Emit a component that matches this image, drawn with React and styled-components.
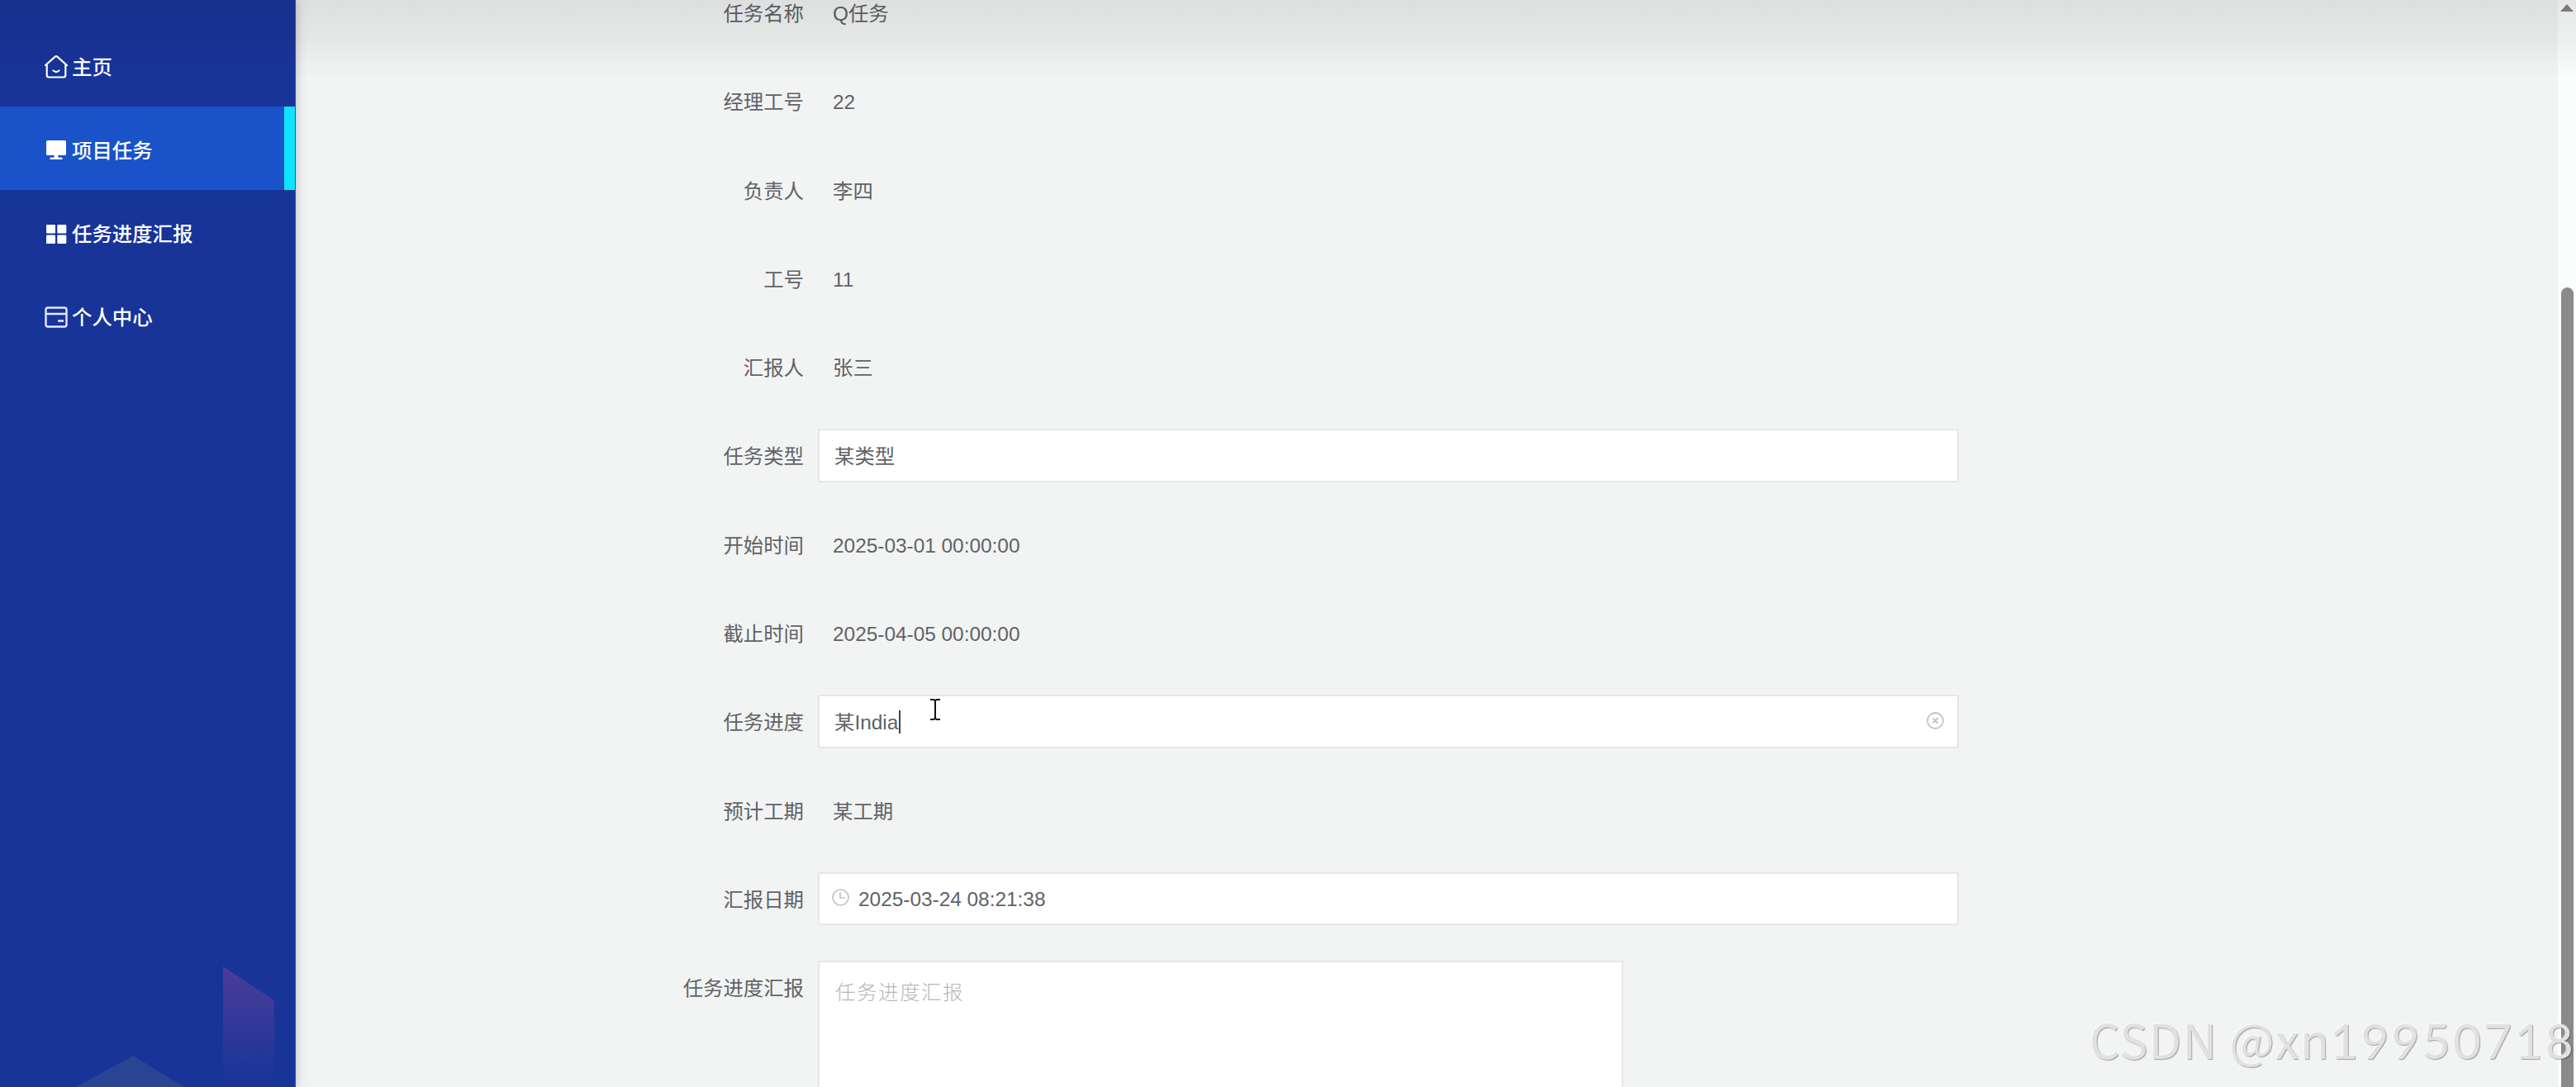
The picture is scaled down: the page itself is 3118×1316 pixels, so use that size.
import React from 'react'
import styled, { createGlobalStyle } from 'styled-components'

const GlobalStyle = createGlobalStyle`
    * {
        box-sizing: border-box;
    }

    body {
        margin: 0;
        overflow: hidden;
        font-family: "Liberation Sans", "Noto Sans CJK SC", sans-serif;
        font-size: 24.4px;
        color: #606266;
    }
`

const Page = styled.div`
    position: relative;
    display: flex;
    width: 100vw;
    height: 100vh;
    overflow: hidden;
    background: #f2f4f4;
`

const Sidebar = styled.aside`
    position: relative;
    display: flex;
    flex-direction: column;
    flex: none;
    width: 358px;
    padding-top: 28px;
    background: #183499;
    border-right: 1px solid #4b5570;
    box-shadow: 0 0 12px rgba(20, 30, 60, .28);
    z-index: 1;
`

const MenuItem = styled.div`
    display: flex;
    align-items: center;
    height: 101px;
    padding: 6px 0 0 54px;
    line-height: 36px;
    font-weight: 500;
    color: #fff;
    background: ${props => props.$active ? '#1a53c9' : 'transparent'};
    border-right: ${props => props.$active ? '13px solid #0de4ff' : '0'};

    svg {
        display: block;
        width: 28px;
        height: 28px;
        margin: 0 5px 2px 0;
    }
`

const Decoration = styled.svg`
    position: absolute;
    left: 0;
    bottom: 0;
    width: 357px;
    height: 160px;
`

const Content = styled.main`
    flex: 1;
    overflow: hidden;
`

const Form = styled.div`
    display: flex;
    flex-direction: column;
    gap: 43.3px;
    width: 1738px;
    margin: -17px 0 0 275px;
`

const Row = styled.div`
    display: flex;
    height: ${props => props.$tall ? '209px' : '64px'};
    line-height: 67px;
`

const Label = styled.div`
    flex: none;
    width: 357px;
    padding-right: 17px;
    text-align: right;
    white-space: nowrap;
`

const Value = styled.div`
    padding-left: 18px;
    white-space: nowrap;
`

const Field = styled.div`
    display: flex;
    align-items: center;
    width: 1381px;
    height: 64.5px;
    padding: 0 22px 0 ${props => props.$icon ? '15px' : '18px'};
    line-height: 60px;
    background: #fff;
    border: 2px solid #e5e7e7;
    white-space: nowrap;

    svg {
        display: block;
        flex: none;
        width: 21px;
        height: 21px;
        margin: 0 11px 4px 0;
    }

    svg.clear {
        margin: 0 -6px 3px auto;
    }
`

const FieldText = styled.span`
    padding-top: 2px;
`

const Caret = styled.span`
    width: 2px;
    height: 28px;
    margin-left: 1px;
    background: #444;
`

const Textarea = styled.div`
    width: 975px;
    height: 220px;
    padding: 6px 19px;
    line-height: 62px;
    font-weight: 300;
    letter-spacing: 1.6px;
    color: #b4b6bb;
    background: #fff;
    border: 2px solid #e5e7e7;
    box-shadow: 10px 0 0 #f4f4f4;
`

const Scrollbar = styled.div`
    display: flex;
    flex-direction: column;
    align-items: center;
    flex: none;
    width: 22px;
    padding: 5px 0 0 0;
    background: #fbfcfc;

    svg {
        display: block;
        flex: none;
        width: 16px;
        height: 9px;
    }
`

const Thumb = styled.div`
    width: 15px;
    height: 1100px;
    flex: none;
    margin-top: 334px;
    border-radius: 8px;
    background: #8a8a8a;
`

const TopShade = styled.div`
    position: absolute;
    top: 0;
    left: 0;
    right: 0;
    height: 97px;
    z-index: 2;
    background: linear-gradient(rgba(0, 0, 0, .085), rgba(0, 0, 0, .05) 50%, rgba(0, 0, 0, 0));
`

const Pointer = styled.svg`
    position: absolute;
    left: 1125px;
    top: 845px;
    width: 14px;
    height: 28px;
    z-index: 3;
`

const Watermark = styled.div`
    position: absolute;
    right: 0;
    bottom: 13px;
    z-index: 3;
    font-family: "Noto Sans CJK SC", sans-serif;
    font-size: 57.5px;
    font-weight: 400;
    line-height: 88px;
    letter-spacing: 1.2px;
    white-space: nowrap;
    color: #e1e1e1;
    text-shadow: 1px 1px 1px rgba(0, 0, 0, .35), -1px -1px 0 rgba(255, 255, 255, .5);
`

const WatermarkId = styled.span`
    font-family: Lato, sans-serif;
    font-size: 58.5px;
    letter-spacing: 3.3px;
`

const HomeIcon = () => (
    <svg viewBox="0 0 28 28" fill="none" stroke="#fff" strokeWidth="2.2" strokeLinecap="round" strokeLinejoin="round">
        <path d="M1 12 12.7 1.6q1.3-1 2.6 0L27 12M2.7 11v13q0 2.5 2.5 2.5h17.6q2.5 0 2.5-2.5V11" />
        <path d="M10.5 18.5q3.5 3 7 0" />
    </svg>
)

const MonitorIcon = () => (
    <svg viewBox="0 0 28 28" fill="#fff">
        <path d="M3.5 2h21q1.5 0 1.5 1.5v15q0 1.5-1.5 1.5h-21Q2 20 2 18.5v-15Q2 2 3.5 2zM12 20h4l.8 2.8h4.700V25h-15v-2.200h4.700z" />
    </svg>
)

const GridIcon = () => (
    <svg viewBox="0 0 28 28" fill="#fff">
        <rect x="2" y="3" width="11" height="10.5" rx="1" />
        <rect x="15.3" y="3" width="11" height="10.5" rx="1" />
        <rect x="2" y="15.5" width="11" height="10.5" rx="1" />
        <rect x="15.3" y="15.5" width="11" height="10.5" rx="1" />
    </svg>
)

const CardIcon = () => (
    <svg viewBox="0 0 28 28" fill="none" stroke="#e3e8ff" strokeWidth="2.4">
        <rect x="1.5" y="2.5" width="25" height="23" rx="2.5" />
        <path d="M1.5 10h25M16 18.5h7" />
    </svg>
)

const ClockIcon = () => (
    <svg viewBox="0 0 21 21" fill="none" stroke="#c0c4cc" strokeWidth="1.7">
        <circle cx="10.5" cy="10.5" r="9.5" />
        <path d="M10 4.5V11h6" />
    </svg>
)

const ClearIcon = () => (
    <svg className="clear" viewBox="0 0 21 21" fill="none" stroke="#c0c4cc" strokeWidth="1.8">
        <circle cx="10.5" cy="10.5" r="9.5" />
        <path d="m7.5 7.5 6 6m0-6-6 6" />
    </svg>
)

const menu = [
    { name: '主页', icon: <HomeIcon /> },
    { name: '项目任务', icon: <MonitorIcon />, active: true },
    { name: '任务进度汇报', icon: <GridIcon /> },
    { name: '个人中心', icon: <CardIcon /> },
]

const rows = [
    { label: '任务名称', value: 'Q任务' },
    { label: '经理工号', value: '22' },
    { label: '负责人', value: '李四' },
    { label: '工号', value: '11' },
    { label: '汇报人', value: '张三' },
    { label: '任务类型', value: '某类型', type: 'input' },
    { label: '开始时间', value: '2025-03-01 00:00:00' },
    { label: '截止时间', value: '2025-04-05 00:00:00' },
    { label: '任务进度', value: '某India', type: 'focused' },
    { label: '预计工期', value: '某工期' },
    { label: '汇报日期', value: '2025-03-24 08:21:38', type: 'date' },
    { label: '任务进度汇报', value: '任务进度汇报', type: 'textarea' },
]

function FormControl({ type, value }){
    if(!type) return <Value>{value}</Value>
    if(type === 'textarea') return <Textarea>{value}</Textarea>

    return(
        <Field $icon={type === 'date'}>
            {type === 'date' && <ClockIcon />}
            <FieldText>{value}</FieldText>
            {type === 'focused' && <Caret />}
            {type === 'focused' && <ClearIcon />}
        </Field>
    )
}

export default function App(){
    return(
        <Page>
            <GlobalStyle />
            <Sidebar>
                {menu.map(item => (
                    <MenuItem key={item.name} $active={item.active}>
                        {item.icon}
                        <span>{item.name}</span>
                    </MenuItem>
                ))}
                <Decoration viewBox="0 0 357 160">
                    <defs>
                        <linearGradient id="tower" x1="0" y1="0" x2="0" y2="1">
                            <stop offset="0" stopColor="#4c3c98" />
                            <stop offset="1" stopColor="#4c3c98" stopOpacity="0" />
                        </linearGradient>
                    </defs>
                    <path d="M270 14 332 55V155H270z" fill="url(#tower)" />
                    <path d="M92 160 161 122 223 160z" fill="#294493" />
                </Decoration>
            </Sidebar>

            <Content>
                <Form>
                    {rows.map(row => (
                        <Row key={row.label} $tall={row.type === 'textarea'}>
                            <Label>{row.label}</Label>
                            <FormControl type={row.type} value={row.value} />
                        </Row>
                    ))}
                </Form>
            </Content>

            <Scrollbar>
                <svg viewBox="0 0 16 9" fill="#858587">
                    <path d="M8 0 16 9H0z" />
                </svg>
                <Thumb />
            </Scrollbar>

            <TopShade />
            <Pointer viewBox="0 0 14 28" fill="none" stroke="#111" strokeWidth="2">
                <path d="M1 2h4l2 1 2-1h4M7 3v22M1 26h4l2-1 2 1h4" />
            </Pointer>
            <Watermark>
                CSDN @xn<WatermarkId>19950718</WatermarkId>
            </Watermark>
        </Page>
    )
}
